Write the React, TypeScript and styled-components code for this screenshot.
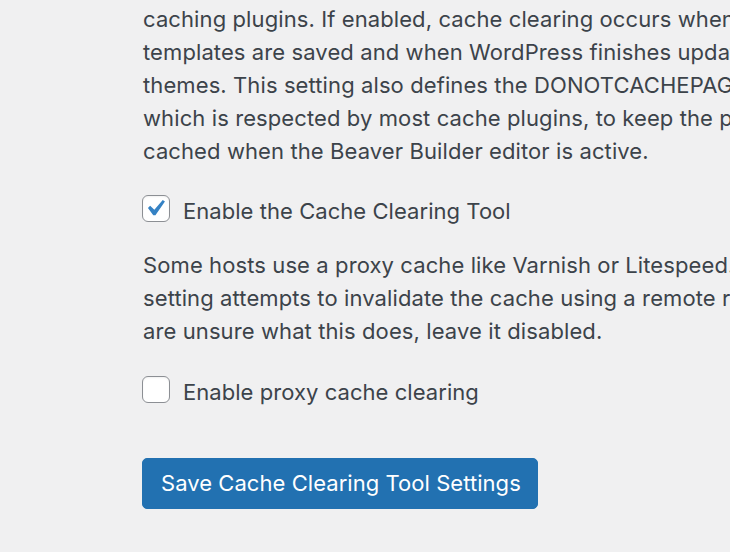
import React from "react";
import styled, { createGlobalStyle } from "styled-components";

const GlobalStyle = createGlobalStyle`
  html, body {
    margin: 0;
    padding: 0;
    background: #f0f0f1;
    overflow: hidden;
  }
  body {
    font-family: Inter, "Noto Sans", "Liberation Sans", sans-serif;
    color: #3c434a;
    -webkit-font-smoothing: antialiased;
  }
`;

const Page = styled.div`
  box-sizing: border-box;
  width: 1400px;
  padding: 3px 0 0 143px;
  display: flex;
  flex-direction: column;
  align-items: flex-start;
`;

const Description = styled.p<{ $gapTop: number }>`
  margin: ${(p) => p.$gapTop}px 0 0 0;
  font-size: 22px;
  letter-spacing: 0.1px;
  line-height: 33px;
  color: #3c434a;
`;

const Line = styled.span`
  display: block;
  white-space: nowrap;
`;

const CheckRow = styled.label<{ $gapTop: number }>`
  margin: ${(p) => p.$gapTop}px 0 0 -1px;
  display: flex;
  align-items: center;
  gap: 13px;
  font-size: 22px;
  letter-spacing: 0.05px;
  line-height: 33px;
  color: #3c434a;
  cursor: pointer;
`;

const LabelText = styled.span`
  margin: 3px 0 -3px;
`;

const Box = styled.span`
  box-sizing: border-box;
  width: 28px;
  height: 27px;
  flex: none;
  border: 1px solid #8c8f94;
  border-radius: 6px;
  background: #fff;
  box-shadow: inset 0 1px 2px rgba(0, 0, 0, 0.06);
  display: flex;
`;

const CheckMark = styled.svg`
  width: 100%;
  height: 100%;
  fill: #3582c4;
`;

const SaveButton = styled.button`
  margin: 52px 0 0 -1px;
  box-sizing: border-box;
  height: 51px;
  width: 396px;
  padding: 0 18px;
  border: 1px solid #2271b1;
  border-radius: 5px;
  background: #2271b1;
  color: #fff;
  font-family: inherit;
  font-size: 22px;
  letter-spacing: 0.05px;
  line-height: 49px;
  text-align: left;
  white-space: nowrap;
  cursor: pointer;
`;

function Checkbox({ label, checked, gapTop }: { label: string; checked: boolean; gapTop: number }) {
  return (
    <CheckRow $gapTop={gapTop}>
      <Box>
        {checked && (
          <CheckMark viewBox="3.05 2.4 15.3 15.3" aria-hidden="true">
            <path d="M14.83 4.89l1.34.94-5.81 8.38H9.02L5.78 9.67l1.34-1.25 2.57 2.4z" />
          </CheckMark>
        )}
      </Box>
      <LabelText>{label}</LabelText>
    </CheckRow>
  );
}

export default function App() {
  return (
    <>
      <GlobalStyle />
      <Page>
        <Description $gapTop={0}>
          <Line>caching plugins. If enabled, cache clearing occurs when layouts or</Line>
          <Line>templates are saved and when WordPress finishes updating plugins or</Line>
          <Line>themes. This setting also defines the DONOTCACHEPAGE constant,</Line>
          <Line>which is respected by most cache plugins, to keep the page from being</Line>
          <Line>cached when the Beaver Builder editor is active.</Line>
        </Description>
        <Checkbox label="Enable the Cache Clearing Tool" checked gapTop={24} />
        <Description $gapTop={24}>
          <Line>Some hosts use a proxy cache like Varnish or Litespeed. This</Line>
          <Line>setting attempts to invalidate the cache using a remote request. If you</Line>
          <Line>are unsure what this does, leave it disabled.</Line>
        </Description>
        <Checkbox label="Enable proxy cache clearing" checked={false} gapTop={25} />
        <SaveButton type="button">Save Cache Clearing Tool Settings</SaveButton>
      </Page>
    </>
  );
}
